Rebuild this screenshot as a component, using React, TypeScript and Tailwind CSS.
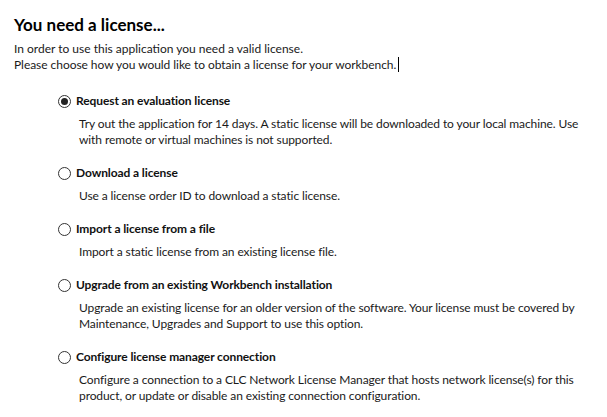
import React from "react";

const items = [
  {
    label: "Request an evaluation license",
    desc: [
      "Try out the application for 14 days. A static license will be downloaded to your local machine. Use",
      "with remote or virtual machines is not supported.",
    ],
    checked: true,
  },
  { label: "Download a license", desc: ["Use a license order ID to download a static license."] },
  { label: "Import a license from a file", desc: ["Import a static license from an existing license file."] },
  {
    label: "Upgrade from an existing Workbench installation",
    desc: [
      "Upgrade an existing license for an older version of the software. Your license must be covered by",
      "Maintenance, Upgrades and Support to use this option.",
    ],
  },
  {
    label: "Configure license manager connection",
    desc: [
      "Configure a connection to a CLC Network License Manager that hosts network license(s) for this",
      "product, or update or disable an existing connection configuration.",
    ],
  },
];

export default function App() {
  return (
    <div
      className="w-[607px] h-[417px] bg-white text-black overflow-hidden pl-[14px] pt-[14px]"
      style={{ fontFamily: 'Lato, "Noto Sans", sans-serif' }}
    >
      <h1 className="text-[17px] font-bold leading-[22px]">You need a license...</h1>
      <div className="mt-[5px] text-[12px] leading-[16px] text-[#1a1a1a]">
        <div className="h-[16px]">In order to use this application you need a valid license.</div>
        <div className="h-[16px] tracking-[-0.05px]">
          Please choose how you would like to obtain a license for your workbench.
          <span className="ml-[2px] inline-block w-px h-[15px] bg-black align-[-3px]" />
        </div>
      </div>
      <div className="mt-[19px] ml-[44px] flex flex-col gap-[16px]">
        {items.map((it) => (
          <div key={it.label} className="flex flex-col">
            <div className="flex items-center h-[18px]">
              <span className="w-[13px] h-[13px] rounded-full border border-[#333] flex items-center justify-center shrink-0">
                {it.checked && <span className="w-[7px] h-[7px] rounded-full bg-[#222]" />}
              </span>
              <span className="ml-[5px] text-[12px] font-bold text-[#111] tracking-[-0.1px]">{it.label}</span>
            </div>
            <div className="mt-[6px] ml-[21px] text-[12px] leading-[16px] text-[#1a1a1a] tracking-[-0.1px]">
              {it.desc.map((d) => (
                <div key={d} className="whitespace-nowrap">{d}</div>
              ))}
            </div>
          </div>
        ))}
      </div>
    </div>
  );
}
